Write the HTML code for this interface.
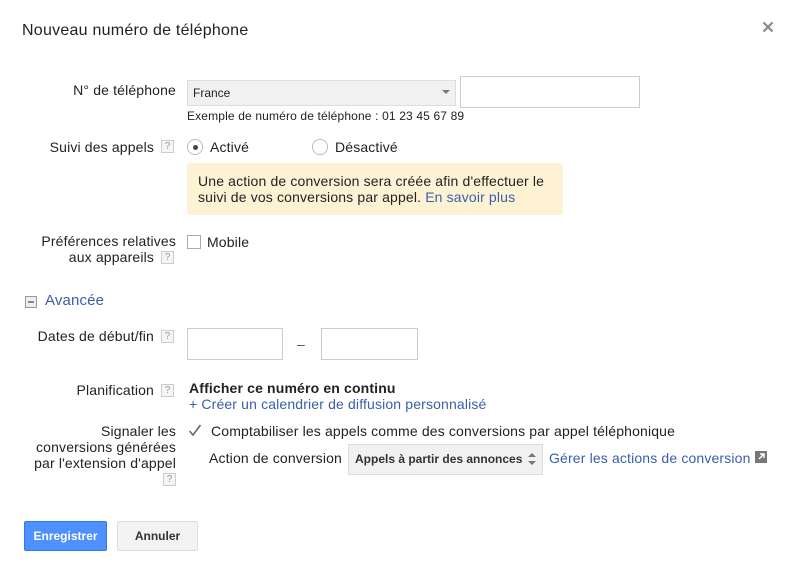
<!DOCTYPE html>
<html><head><meta charset="utf-8"><style>
*{margin:0;padding:0;box-sizing:border-box}
body{width:796px;height:568px;background:#fff;font-family:"Liberation Sans",Arial,sans-serif;font-size:14px;color:#222;position:relative;overflow:hidden;letter-spacing:0.15px}
.a{position:absolute;white-space:nowrap;line-height:16px}
.r{text-align:right}
.q{position:absolute;width:13px;height:13px;border:1px solid #ccc;background:#f5f5f5;color:#999;font-size:10px;line-height:11px;text-align:center;letter-spacing:0}
.box{position:absolute;border:1px solid #ccc;background:#fff}
.link{color:#3a5fa8}
</style></head><body>
<div class="a" style="left:22px;top:22px;font-size:16px;line-height:18px;color:#222;letter-spacing:0.25px">Nouveau numéro de téléphone</div>
<svg class="a" style="left:762px;top:21px" width="12" height="12" viewBox="0 0 12 12"><path d="M1.5 1.5L10.5 10.5M10.5 1.5L1.5 10.5" stroke="#888" stroke-width="2.2"/></svg>

<div class="a r" style="right:620px;top:82px">N° de téléphone</div>
<div class="a" style="left:187px;top:80px;width:269px;height:26px;background:#f1f1f1;border:1px solid #ddd;font-size:12px;line-height:24px;padding-left:5px;letter-spacing:0">France</div>
<svg class="a" style="left:442px;top:90px" width="8" height="5"><path d="M0 0L8 0L4 4Z" fill="#777"/></svg>
<div class="box" style="left:460px;top:76px;width:180px;height:32px"></div>
<div class="a" style="left:187px;top:108px;font-size:12px;color:#222">Exemple de numéro de téléphone : 01 23 45 67 89</div>

<div class="a r" style="right:642px;top:139px">Suivi des appels</div>
<div class="q" style="left:161px;top:140px">?</div>
<div class="a" style="left:187px;top:139px;width:16px;height:16px;border:1px solid #bbb;border-radius:50%"></div>
<div class="a" style="left:193px;top:145px;width:5px;height:5px;background:#444;border-radius:50%"></div>
<div class="a" style="left:210px;top:139px">Activé</div>
<div class="a" style="left:312px;top:139px;width:16px;height:16px;border:1px solid #bbb;border-radius:50%"></div>
<div class="a" style="left:335px;top:139px">Désactivé</div>
<div class="a" style="left:187px;top:163px;width:376px;height:52px;background:#fdf3d4;border-radius:3px"></div>
<div class="a" style="left:198px;top:173px">Une action de conversion sera créée afin d'effectuer le</div>
<div class="a" style="left:198px;top:189px">suivi de vos conversions par appel. <span class="link">En savoir plus</span></div>

<div class="a r" style="right:620px;top:233px">Préférences relatives</div>
<div class="a r" style="right:642px;top:249px">aux appareils</div>
<div class="q" style="left:161px;top:251px">?</div>
<div class="a" style="left:187px;top:235px;width:14px;height:14px;border:1px solid #aaa"></div>
<div class="a" style="left:207px;top:234px">Mobile</div>

<div class="a" style="left:25px;top:296px;width:12px;height:12px;border:1px solid #999;background:#eee"></div>
<div class="a" style="left:28px;top:301px;width:6px;height:2px;background:#888"></div>
<div class="a link" style="left:45px;top:293px;font-size:15px">Avancée</div>

<div class="a r" style="right:642px;top:328px">Dates de début/fin</div>
<div class="q" style="left:161px;top:330px">?</div>
<div class="box" style="left:187px;top:328px;width:96px;height:32px"></div>
<div class="a" style="left:297px;top:336px;color:#555">–</div>
<div class="box" style="left:321px;top:328px;width:97px;height:32px"></div>

<div class="a r" style="right:642px;top:382px">Planification</div>
<div class="q" style="left:161px;top:384px">?</div>
<div class="a" style="left:189px;top:380px;font-weight:bold">Afficher ce numéro en continu</div>
<div class="a link" style="left:189px;top:396px">+ Créer un calendrier de diffusion personnalisé</div>

<div class="a r" style="right:620px;top:423px">Signaler les</div>
<div class="a r" style="right:620px;top:439px">conversions générées</div>
<div class="a r" style="right:620px;top:455px">par l'extension d'appel</div>
<div class="q" style="left:163px;top:473px">?</div>
<svg class="a" style="left:188px;top:424px" width="14" height="13"><path d="M1.5 7L5 11L12.5 1" stroke="#666" stroke-width="1.6" fill="none"/></svg>
<div class="a" style="left:211px;top:423px">Comptabiliser les appels comme des conversions par appel téléphonique</div>
<div class="a" style="left:209px;top:450px">Action de conversion</div>
<div class="a" style="left:348px;top:444px;width:195px;height:31px;background:#f1f1f1;border:1px solid #ddd;font-size:12px;font-weight:bold;line-height:29px;padding-left:6px;color:#333;letter-spacing:0">Appels à partir des annonces</div>
<svg class="a" style="left:528px;top:452px" width="8" height="14"><path d="M0 5L4 1L8 5Z M0 9L4 13L8 9Z" fill="#777"/></svg>
<div class="a link" style="left:549px;top:450px">Gérer les actions de conversion</div>
<svg class="a" style="left:755px;top:451px" width="12" height="12"><rect width="12" height="12" fill="#777"/><path d="M4 8L9 3M5 3H9V7" stroke="#fff" stroke-width="1.4" fill="none"/></svg>

<div class="a" style="left:24px;top:521px;width:83px;height:30px;background:#4d90fe;border:1px solid #3079ed;border-radius:2px;color:#fff;font-weight:bold;font-size:12px;line-height:28px;text-align:center;letter-spacing:0">Enregistrer</div>
<div class="a" style="left:117px;top:521px;width:81px;height:30px;background:#f3f3f3;border:1px solid #ddd;border-radius:2px;color:#333;font-weight:bold;font-size:12px;line-height:28px;text-align:center;letter-spacing:0">Annuler</div>
</body></html>
